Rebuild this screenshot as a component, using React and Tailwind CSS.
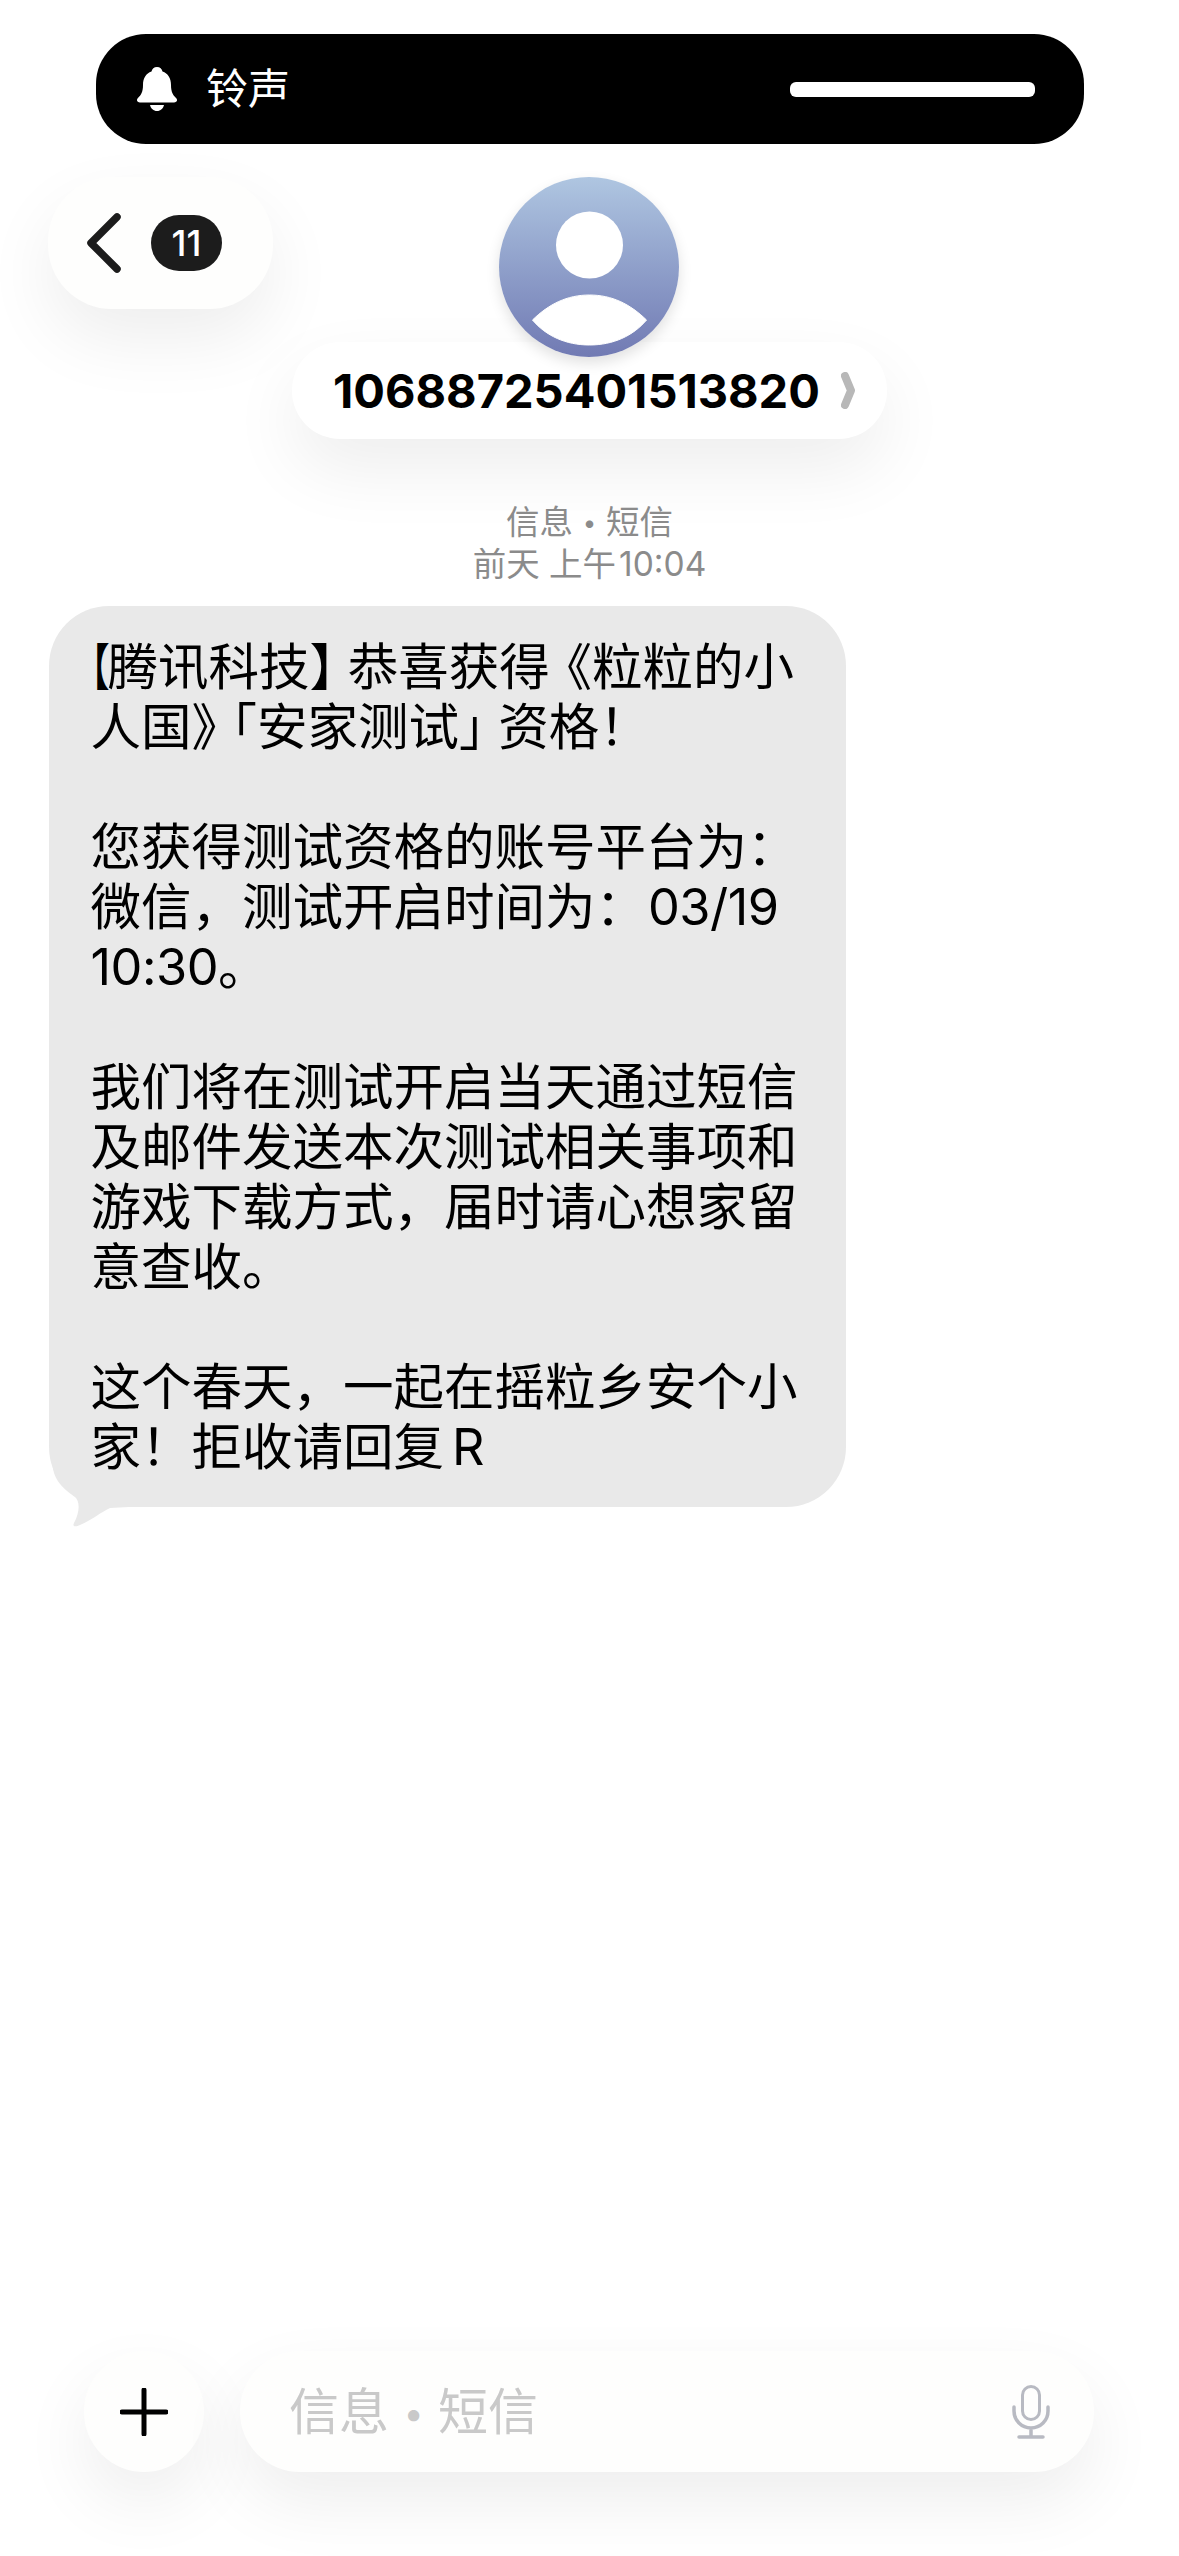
export default function App() {
  return (
    <div className="w-[1179px] h-[2556px] bg-white flex flex-col overflow-hidden font-['Inter','Noto_Sans_CJK_SC',sans-serif]">
      <div className="ml-[96px] mr-[95px] mt-[34px] h-[110px] rounded-[50px] bg-black flex items-center pl-[41px] pr-[49px]">
        <svg width="40" height="44" viewBox="0 0 40 44" className="shrink-0">
          <path d="M20 0c3 0 5 2 5.500 4.500C31 6.500 34 11 34 18c0 7 2 10 5 13 2 2 1 4.500-2 4.500H3c-3 0-4-2.500-2-4.500 3-3 5-6 5-13 0-7 3-11.500 8.500-13.500C15 2 17 0 20 0z" fill="#fff" />
          <path d="M13 38h14c-.8 3.500-3.500 6-7 6s-6.200-2.500-7-6z" fill="#fff" />
        </svg>
        <span className="ml-[29px] text-[42px] leading-[50px] text-white">铃声</span>
        <div className="ml-auto w-[245px] h-[15px] rounded-[6px] bg-white" />
      </div>

      <div className="mt-[33px] pl-[48px] flex items-start">
        <div className="w-[225px] h-[132px] rounded-[64px] bg-[#fefefd] shadow-[0_30px_70px_rgba(0,0,0,0.07)] flex items-center pl-[38px]">
          <svg width="36" height="60" viewBox="0 0 36 60" className="shrink-0">
            <path d="M31 4 L5 30 L31 56" fill="none" stroke="#1c1c1c" strokeWidth="7.500" strokeLinecap="round" strokeLinejoin="round" />
          </svg>
          <div className="ml-[29px] w-[71px] h-[56px] rounded-[28px] bg-[#1c1c1c] flex items-center justify-center text-[36px] font-medium text-white">11</div>
        </div>
        <div className="ml-[19px] w-[595px] flex flex-col items-center">
          <div className="relative z-10 mr-[1px] w-[180px] h-[180px] rounded-full bg-gradient-to-b from-[#afc6e1] to-[#717ab3] shadow-[0_6px_14px_rgba(0,0,0,0.12)]">
            <svg width="180" height="180" viewBox="0 0 180 180">
              <circle cx="90.500" cy="68" r="33.500" fill="#fff" />
              <path d="M33.500 143C50 127 68 118 90.500 118S131 127 147.500 143C134 159 114 168 90.500 168S47 159 33.500 143z" fill="#fff" stroke="#fff" strokeWidth="1" strokeLinejoin="round" />
            </svg>
          </div>
          <div className="-mt-[15px] w-[595px] h-[97px] rounded-[48px] bg-white shadow-[0_30px_70px_rgba(0,0,0,0.07)] flex items-center pl-[41px]">
            <span className="text-[47px] leading-[56px] font-bold text-black">10688725401513820</span>
            <svg width="14" height="37" viewBox="0 0 14 37" className="ml-[21px] shrink-0">
              <path d="M4 4 L10 18.500 L4 33" fill="none" stroke="#b8b8b8" strokeWidth="8" strokeLinecap="round" strokeLinejoin="round" />
            </svg>
          </div>
        </div>
      </div>

      <div className="mt-[62px] flex flex-col items-center text-[33.500px] leading-[42px] text-[#8b8b8b]">
        <div className="h-[42px]">信息<span className="inline-block w-[33px] text-center text-[24px] leading-none relative -top-[3px]">•</span>短信</div>
        <div className="h-[42px]">前天 上午<span className="ml-[3px]">10:04</span></div>
      </div>

      <div className="relative mt-[21px] ml-[49px] w-[797px] h-[901px] rounded-[60px] bg-[#e9e9e9] pl-[41.500px] pt-[31px]">
        <div className="relative z-10 whitespace-pre text-[50.500px] leading-[60px] text-black [text-spacing-trim:space-all]">
          <div><span className="inline-block w-[17px] [font-feature-settings:'halt'] scale-x-[0.75] origin-left">【</span>腾讯科技<span className="mr-[13px] [font-feature-settings:'halt']">】</span>恭喜获得<span className="ml-[17px] [font-feature-settings:'halt']">《</span>粒粒的小</div>
          <div>人国<span className="[font-feature-settings:'halt']">》</span><span className="ml-[15px] [font-feature-settings:'halt']">「</span>安家测试<span className="mr-[14px] [font-feature-settings:'halt']">」</span>资格！</div>
          <div className="h-[60px]" />
          <div>您获得测试资格的账号平台为：</div>
          <div>微信，测试开启时间为：<span className="ml-[2px] tracking-[-0.5px]">03/19</span></div>
          <div><span className="tracking-[-0.5px]">10:30</span>。</div>
          <div className="h-[60px]" />
          <div>我们将在测试开启当天通过短信</div>
          <div>及邮件发送本次测试相关事项和</div>
          <div>游戏下载方式，届时请心想家留</div>
          <div>意查收。</div>
          <div className="h-[60px]" />
          <div>这个春天，一起在摇粒乡安个小</div>
          <div>家！拒收请回复<span className="ml-[8px]">R</span></div>
        </div>
        <svg width="80" height="90" viewBox="0 0 80 90" className="absolute left-0 bottom-[-23px]">
          <path d="M0 0 C1 12 3 24 5 33 C9 45 18 51 26 57 C31 61 31 72 25 83 C23 87 27 87 31 85 C43 80 52 72 61 68 L80 67 L80 0 Z" fill="#e9e9e9" />
        </svg>
      </div>

      <div className="mt-auto mb-[84px] pl-[84px] flex items-center">
        <div className="w-[120px] h-[121px] rounded-full bg-[#fefefd] shadow-[0_30px_70px_rgba(0,0,0,0.07)] flex items-center justify-center">
          <svg width="48" height="48" viewBox="0 0 48 48">
            <path d="M24 2V46M2 24H46" fill="none" stroke="#000" strokeWidth="5" strokeLinecap="round" />
          </svg>
        </div>
        <div className="ml-[36px] w-[854px] h-[121px] rounded-[60px] bg-[#fefefd] shadow-[0_30px_70px_rgba(0,0,0,0.07)] flex items-center pl-[49px] pr-[44px]">
          <span className="h-[60px] text-[50px] leading-[60px] text-[#c9c9c9]">信息<span className="inline-block w-[49px] text-center text-[36px] leading-none relative -top-[4px]">•</span>短信</span>
          <svg width="38" height="54" viewBox="0 0 38 54" className="ml-auto shrink-0">
            <rect x="10.500" y="1.500" width="17" height="33" rx="8.500" fill="none" stroke="#b8bac2" strokeWidth="3" />
            <path d="M2 22v4c0 9.500 7.500 17 17 17s17-7.500 17-17v-4M19 43v9M7 52h24" fill="none" stroke="#b8bac2" strokeWidth="3.500" strokeLinecap="round" />
          </svg>
        </div>
      </div>
    </div>
  );
}
